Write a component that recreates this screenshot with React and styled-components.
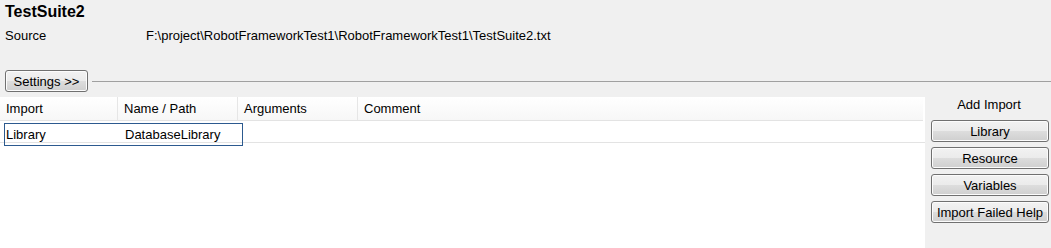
import styled, { createGlobalStyle } from "styled-components";

const GlobalStyle = createGlobalStyle`
  html, body {
    margin: 0;
    padding: 0;
    background: #f0f0f0;
  }
  body {
    font-family: "Liberation Sans", Arial, sans-serif;
    font-size: 13px;
    color: #000;
  }
`;

const Page = styled.div`
  width: 1051px;
  height: 248px;
  overflow: hidden;
  display: flex;
  flex-direction: column;
`;

const Title = styled.h1`
  margin: 0;
  padding: 3px 0 0 5px;
  height: 22px;
  font-size: 16px;
  font-weight: bold;
`;

const SourceRow = styled.div`
  display: grid;
  grid-template-columns: 141px 1fr;
  padding: 3px 5px 0;
  height: 20px;
`;

const SettingsBar = styled.div`
  display: flex;
  align-items: center;
  gap: 4px;
  padding: 22px 0 0 5px;
  height: 22px;

  &::after {
    content: "";
    flex: 1;
    border-top: 1px solid #a0a0a0;
    margin-top: 1px;
  }
`;

const Button = styled.button`
  font-family: inherit;
  font-size: 13px;
  color: #000;
  height: 22px;
  width: ${(p) => p.$w}px;
  padding: 0;
  border: 1px solid #707070;
  border-radius: 3px;
  background: linear-gradient(#f2f2f2 0%, #ebebeb 50%, #dddddd 51%, #cfcfcf 100%);
  box-shadow: inset 0 0 0 1px #fcfcfc;
`;

const Body = styled.div`
  flex: 1;
  display: flex;
  margin-top: 5px;
`;

const Grid = styled.div`
  width: 925px;
  background: #fff;
`;

const Row = styled.div`
  display: grid;
  grid-template-columns: 118px 120px 120px 1fr;
  height: ${(p) => (p.$header ? 23 : 21)}px;
  border-bottom: 1px solid #e3e3e3;
  background: ${(p) => (p.$header ? "linear-gradient(#ffffff, #f7f7f7)" : "#fff")};
  margin-right: ${(p) => (p.$header ? 2 : 0)}px;
`;

const Cell = styled.div`
  display: flex;
  align-items: center;
  padding-left: 6px;
  border-right: ${(p) => (p.$header && !p.$last ? "1px solid #e6e6e6" : "none")};
`;

const CellRange = styled.div`
  grid-column: 1 / span 2;
  display: grid;
  grid-template-columns: 118px 120px;
  border: 1px solid #2c5a8f;
  margin: 2px 0 -3px 4px;
  width: 239px;
  height: 23px;
  box-sizing: border-box;

  ${Cell} {
    padding-left: 1px;
  }
  ${Cell} + ${Cell} {
    padding-left: 2px;
  }
`;

const Side = styled.div`
  flex: 1;
  display: flex;
  flex-direction: column;
  align-items: flex-end;
  gap: 5px;
  padding-right: 2px;
`;

const SideLabel = styled.div`
  align-self: center;
  margin-left: 4px;
  height: 18px;
  line-height: 16px;
`;

export default function App() {
  return (
    <Page>
      <GlobalStyle />
      <Title>TestSuite2</Title>
      <SourceRow>
        <span>Source</span>
        <span>F:\project\RobotFrameworkTest1\RobotFrameworkTest1\TestSuite2.txt</span>
      </SourceRow>
      <SettingsBar>
        <Button $w={83}>Settings &gt;&gt;</Button>
      </SettingsBar>
      <Body>
        <Grid>
          <Row $header>
            <Cell $header>Import</Cell>
            <Cell $header>Name / Path</Cell>
            <Cell $header>Arguments</Cell>
            <Cell $header $last>Comment</Cell>
          </Row>
          <Row>
            <CellRange>
              <Cell>Library</Cell>
              <Cell>DatabaseLibrary</Cell>
            </CellRange>
          </Row>
        </Grid>
        <Side>
          <SideLabel>Add Import</SideLabel>
          <Button $w={118}>Library</Button>
          <Button $w={118}>Resource</Button>
          <Button $w={118}>Variables</Button>
          <Button $w={118}>Import Failed Help</Button>
        </Side>
      </Body>
    </Page>
  );
}
